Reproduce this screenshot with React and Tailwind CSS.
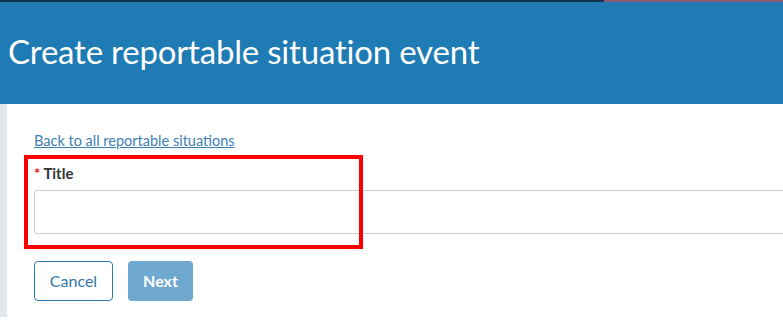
export default function App() {
  return (
    <div className="w-[783px] h-[331px] bg-white overflow-hidden" style={{ fontFamily: "Lato, 'Open Sans', sans-serif" }}>
      <div className="flex h-[2px]">
        <div className="w-[604px] bg-[#12334f]" />
        <div className="flex-1 bg-[#8b5a74]" />
      </div>
      <div className="h-[102px] bg-[#1e7bb4] flex items-center pl-[8px] pb-[4px]">
        <h1 className="text-white text-[33px] leading-none tracking-[-0.2px]">Create reportable situation event</h1>
      </div>
      <div className="flex">
        <div className="w-[7px] shrink-0 h-[213px] bg-[#e4e8ec]" />
        <div className="flex-1 min-w-0 pl-[27px] pt-[24px]">
          <a href="#" className="text-[14.5px] leading-[18px] text-[#3c80b4] underline">Back to all reportable situations</a>
          <div className="relative mt-[6px]">
            <div className="absolute left-[-10px] top-[-3px] w-[339px] h-[94px] border-[4px] border-[#ff0000] pointer-events-none" />
            <label className="block text-[15px] leading-[18px] font-bold text-[#333] pt-[6px]">
              <span className="text-[#e02020] mr-[3px]">*</span>Title
            </label>
            <input className="block mt-[8px] w-[760px] h-[44px] border border-[#cccccc] rounded-[3px] outline-none" />
          </div>
          <div className="flex gap-[15px] mt-[27px]">
            <button className="w-[79px] h-[40px] border border-[#2d79b0] rounded-[4px] text-[#3176ab] text-[16px]">Cancel</button>
            <button className="w-[65px] h-[40px] bg-[#70a9cf] rounded-[4px] text-white text-[16px] font-bold">Next</button>
          </div>
        </div>
      </div>
    </div>
  );
}
